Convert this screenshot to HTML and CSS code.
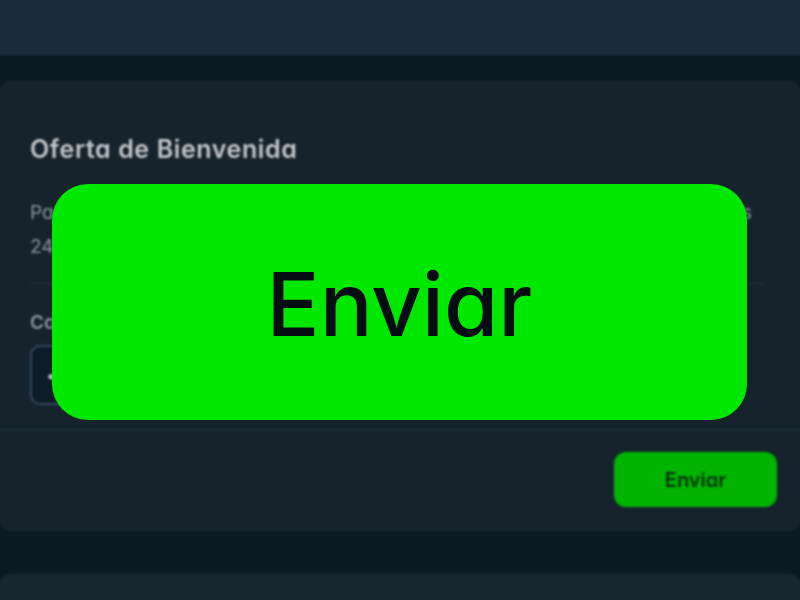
FILE: index.html
```html
<!DOCTYPE html>
<html lang="es">
<head>
<meta charset="utf-8">
<title>Oferta de Bienvenida</title>
<link rel="stylesheet" href="styles.css">
</head>
<body>
<div class="page">
  <header class="topbar"></header>
  <section class="card">
    <div class="card-body">
      <h2 class="card-title">Oferta de Bienvenida</h2>
      <p class="card-text"><span class="line-full">Para recibir la oferta de bienvenida debes enviar el correo antes de las</span><span class="line-rest">24 horas desde el registro.</span></p>
      <hr class="rule">
      <label class="field-label">Correo</label>
      <div class="field"><span class="dots">•</span></div>
    </div>
    <div class="card-foot">
      <button class="send">Enviar</button>
    </div>
  </section>
  <section class="card next"></section>
</div>
<div class="big-send"><span class="big-label">Enviar</span></div>
</body>
</html>
```

FILE: styles.css
```css
* { box-sizing: border-box; }
html, body { margin: 0; height: 100%; overflow: hidden; background: #0c1a24; }
body { font-family: Inter, "Noto Sans", sans-serif; font-feature-settings: "cv11"; }
.page { height: 620px; margin: -10px -10px 0; display: flex; flex-direction: column; padding: 10px 10px 0; filter: blur(1.2px); overflow: hidden; }
.topbar { flex: none; margin: -10px -10px 26px; height: 65px; background: #1b2d3b; }
.card { flex: none; margin: 0 -1px; background: #16232d; border: 1px solid #1c2b37; border-radius: 12px; }
.card-body { height: 347px; padding: 50px 34px 0 30px; }
.card-title { margin: 0 0 30px; height: 34px; font-size: 25px; line-height: 34px; font-weight: 600; letter-spacing: 0.6px; color: #c3c7ca; }
.card-text { margin: 0; width: 722px; font-size: 19px; line-height: 34px; color: #8b949b; }
.line-full { display: block; text-align-last: justify; }
.line-rest { display: block; }
.rule { margin: 19px 0 27px; border: 0; border-top: 1px solid #24323d; }
.field-label { display: block; height: 24px; font-size: 19px; line-height: 24px; font-weight: 600; color: #8b949b; }
.field { margin-top: 10px; height: 60px; padding: 0 14px; display: flex; align-items: center; background: #0e1c28; border: 2px solid #33475a; border-radius: 10px; width: 300px; }
.dots { color: #b6bcc1; font-size: 18px; }
.card-foot { height: 101px; padding: 21px 23px 0 0; display: flex; justify-content: flex-end; align-items: flex-start; border-top: 2px solid #1c2b37; }
.send { width: 163px; height: 55px; background: #00b400; border: 0; border-radius: 12px; font: 600 20px Inter, sans-serif; font-feature-settings: "cv11"; color: #053008; }
.card.next { margin-top: 43px; height: 100px; background: #18262f; }
.big-send { position: absolute; left: 52px; top: 184px; width: 695px; height: 236px; display: flex; align-items: center; justify-content: center; background: #00e800; border-radius: 36px; font-size: 88px; font-weight: 500; color: #050c12; }
.big-label { padding-top: 3px; }
```
